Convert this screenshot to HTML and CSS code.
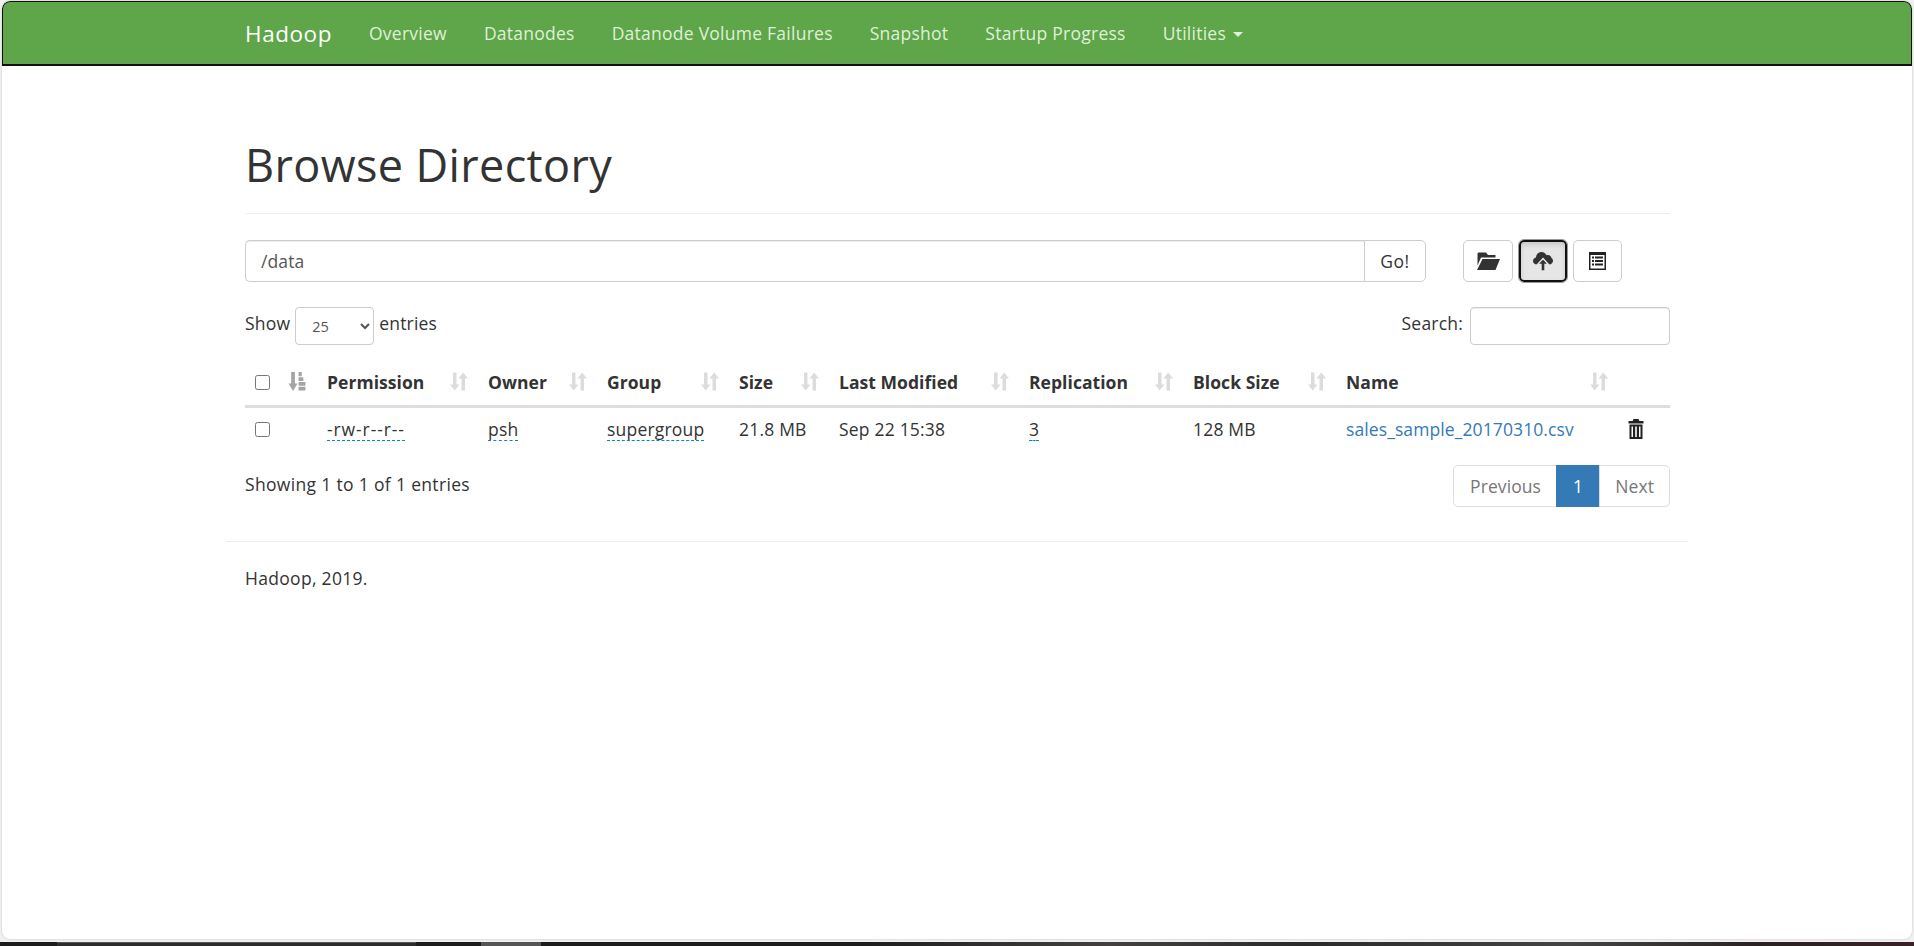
FILE: index.html
```html
<!DOCTYPE html>
<html lang="en">
<head>
<meta charset="utf-8">
<title>Browsing HDFS</title>
<link rel="stylesheet" href="styles.css">
</head>
<body>
<div class="window">
  <nav class="navbar">
    <div class="nav-inner">
      <a class="brand">Hadoop</a>
      <a class="nav-link">Overview</a>
      <a class="nav-link">Datanodes</a>
      <a class="nav-link">Datanode Volume Failures</a>
      <a class="nav-link">Snapshot</a>
      <a class="nav-link">Startup Progress</a>
      <a class="nav-link">Utilities <span class="caret"></span></a>
    </div>
  </nav>
  <main class="container">
    <h1 class="page-title">Browse Directory</h1>
    <div class="path-row">
      <div class="path-group">
        <input class="path-input" type="text" value="/data">
        <button class="go-btn">Go!</button>
      </div>
      <div class="tools">
        <button class="tool-btn">
          <svg class="icon" viewBox="0 0 24 18"><path d="M5 0.500h5l2 2.500h7.500v2.500h-14.500l-3.500 8v-11.500q0-1.500 1-1.500zM6.500 7h17.500l-4.500 11h-18.500z"/></svg>
        </button>
        <button class="tool-btn active">
          <svg class="icon cloud" viewBox="0 0 20 20"><path d="M4 13.500c-2.300 0-4-1.600-4-3.600 0-1.700 1.200-3 2.900-3.400 0.300-3.300 2.800-5.500 5.600-5.500 2.300 0 4.200 1.300 5 3.300 0.500-0.300 1-0.400 1.500-0.400 1.800 0 3.300 1.400 3.500 3.200 1 0.600 1.500 1.600 1.500 2.700 0 2-1.600 3.700-3.600 3.700z"/><path class="halo" d="M10 7.500l5.500 6h-3.500v6.500h-4v-6.500h-3.500z"/></svg>
        </button>
        <button class="tool-btn wide">
          <svg class="icon list" viewBox="0 0 17 18"><path fill-rule="evenodd" d="M0 0h17v18h-17zM1.500 3v13.500h14v-13.500zM3 4.500h2v2h-2zM6 4.500h8v2h-8zM3 8h2v2h-2zM6 8h8v2h-8zM3 11.500h2v2h-2zM6 11.500h8v2h-8z"/></svg>
        </button>
      </div>
    </div>
    <div class="controls">
      <label class="length">Show
        <select class="length-select"><option>25</option></select>
        entries</label>
      <label class="search">Search:
        <input class="search-input" type="text">
      </label>
    </div>
    <table class="files">
      <colgroup>
        <col class="c-check"><col class="c-order"><col class="c-perm"><col class="c-owner"><col class="c-group"><col class="c-size"><col class="c-mod"><col class="c-rep"><col class="c-block"><col class="c-name"><col class="c-del">
      </colgroup>
      <thead>
        <tr>
          <th><input class="check" type="checkbox"></th>
          <th><svg class="sort-by" viewBox="1 0 16 18"><path d="M3.500 0h3.500v11h2.500l-4.250 7-4.250-7h2.500zM10.500 0h3v4h-3zM10.500 5h4.500v3.500h-4.500zM10.500 9.500h6.500v3.500h-6.500zM10.500 14h6.500v3.500h-6.500z"/></svg></th>
          <th class="sortable">Permission<svg class="sort" viewBox="0 0 18 18"><use href="#sorticon"/></svg></th>
          <th class="sortable">Owner<svg class="sort" viewBox="0 0 18 18"><use href="#sorticon"/></svg></th>
          <th class="sortable">Group<svg class="sort" viewBox="0 0 18 18"><use href="#sorticon"/></svg></th>
          <th class="sortable">Size<svg class="sort" viewBox="0 0 18 18"><use href="#sorticon"/></svg></th>
          <th class="sortable">Last Modified<svg class="sort" viewBox="0 0 18 18"><use href="#sorticon"/></svg></th>
          <th class="sortable">Replication<svg class="sort" viewBox="0 0 18 18"><use href="#sorticon"/></svg></th>
          <th class="sortable">Block Size<svg class="sort" viewBox="0 0 18 18"><use href="#sorticon"/></svg></th>
          <th class="sortable">Name<svg class="sort" viewBox="0 0 18 18"><use href="#sorticon"/></svg></th>
          <th></th>
        </tr>
      </thead>
      <tbody>
        <tr>
          <td><input class="check" type="checkbox"></td>
          <td></td>
          <td><span class="editable perm">-rw-r--r--</span></td>
          <td><span class="editable">psh</span></td>
          <td><span class="editable">supergroup</span></td>
          <td>21.8 MB</td>
          <td>Sep 22 15:38</td>
          <td><span class="editable">3</span></td>
          <td>128 MB</td>
          <td><a class="file-link">sales_sample_20170310.csv</a></td>
          <td><svg class="trash" viewBox="0 0 16 20"><path fill-rule="evenodd" d="M5.500 0h5l0.800 2h4.200v2.500h-15v-2.500h4.200zM1.500 5.500h13v14.500h-13zM3.500 7.500v10.500h1.500v-10.500zM7.200 7.500v10.500h1.600v-10.500zM11 7.500v10.500h1.500v-10.500z"/></svg></td>
        </tr>
      </tbody>
    </table>
    <div class="table-foot">
      <div class="info">Showing 1 to 1 of 1 entries</div>
      <ul class="pagination">
        <li class="page prev">Previous</li>
        <li class="page current">1</li>
        <li class="page next">Next</li>
      </ul>
    </div>
  </main>
  <hr class="foot-rule">
  <p class="footer-text">Hadoop, 2019.</p>
</div>
<div class="taskbar">
  <div class="task-a"></div>
  <div class="task-b"></div>
</div>
<svg class="defs" width="0" height="0"><defs><g id="sorticon"><path d="M3 0h3.500v12h3l-4.800 6-4.700-6h3zM11.500 18h3.500v-12h3l-4.800-6-4.700 6h3z"/></g></defs></svg>
</body>
</html>
```

FILE: styles.css
```css
* { box-sizing: border-box; }
html, body { margin: 0; height: 946px; overflow: hidden; }
body {
  background: #f1f1f1;
  color: #333;
  font-family: "Open Sans", "Noto Sans", sans-serif;
  font-size: 17.5px;
  line-height: 25px;
  position: relative;
}
.window {
  position: absolute;
  left: 2px;
  right: 2px;
  top: 1px;
  height: 938px;
  background: #fff;
  border-radius: 8px;
  box-shadow: 0 0 2px #bbb;
  overflow: hidden;
}
.navbar {
  height: 65px;
  background: #5fa549;
  border: 1px solid #111;
  border-width: 1px 1px 2px 1px;
  border-radius: 8px 8px 0 0;
}
.nav-inner {
  margin-left: 242px;
  display: flex;
  align-items: center;
  height: 100%;
}
.brand { color: #fff; font-size: 22.5px; margin-right: 37px; letter-spacing: .55px; }
.nav-link { color: #dff0d8; margin-right: 37px; letter-spacing: .25px; }
.caret {
  display: inline-block;
  width: 0; height: 0;
  margin-left: 2px;
  vertical-align: middle;
  border-top: 5px solid #dff0d8;
  border-left: 5px solid transparent;
  border-right: 5px solid transparent;
}
.container { margin: 0 242px 0 243px; width: 1425px; }
.page-title {
  margin: 0;
  padding-top: 64px;
  height: 148px;
  border-bottom: 1px solid #eee;
  font-size: 45px;
  font-weight: 400;
  line-height: 70px;
  letter-spacing: .38px;
}
.path-row { display: flex; margin-top: 26px; height: 42px; }
.path-group { display: flex; width: 1181px; margin-right: 37px; }
.path-input {
  flex: 1;
  min-width: 0;
  border: 1px solid #ccc;
  border-right: 0;
  border-radius: 5px 0 0 5px;
  padding: 0 15px;
  font: inherit;
  color: #555;
  letter-spacing: .1px;
  box-shadow: inset 0 1px 1px rgba(0,0,0,.075);
  outline: none;
}
.go-btn {
  width: 62px;
  border: 1px solid #ccc;
  border-radius: 0 5px 5px 0;
  background: #fff;
  font: inherit;
  color: #333;
  padding: 0;
  letter-spacing: .5px;
}
.tools { display: flex; gap: 6px; }
.tool-btn {
  width: 50px;
  height: 42px;
  border: 1px solid #ccc;
  border-radius: 5px;
  background: #fff;
  padding: 0;
  display: flex;
  align-items: center;
  justify-content: center;
  color: #333;
}
.tool-btn.wide { width: 49px; }
.tool-btn.active {
  width: 48px;
  background: #e6e6e6;
  border: 2px solid #111;
  outline: 1px solid #999;
  box-shadow: inset 0 3px 5px rgba(0,0,0,.125);
}
.icon { height: 18px; width: 24px; fill: #333; }
.icon.cloud { width: 20px; height: 20px; }
.icon.list { height: 18px; width: 17px; fill: #222; }
.halo { stroke: #e6e6e6; stroke-width: 1.4px; }
.controls {
  display: flex;
  justify-content: space-between;
  margin-top: 25px;
  height: 38px;
}
.length, .search {
  display: flex;
  align-items: flex-start;
  line-height: 32px;
  letter-spacing: .2px;
}
.length-select {
  width: 79px;
  height: 38px;
  margin: 0 5px;
  background: #fff;
  border: 1px solid #ccc;
  border-radius: 4px;
  font-family: inherit;
  font-size: 14.5px;
  color: #555;
  padding-left: 12px;
}
.search-input {
  width: 200px;
  height: 38px;
  margin-left: 7px;
  border: 1px solid #ccc;
  border-radius: 4px;
  outline: none;
  box-shadow: inset 0 1px 1px rgba(0,0,0,.075);
}
.files {
  width: 1425px;
  table-layout: fixed;
  border-collapse: collapse;
  margin-top: 7px;
}
.c-check { width: 34px; } .c-order { width: 38px; } .c-perm { width: 161px; } .c-owner { width: 119px; }
.c-group { width: 132px; } .c-size { width: 100px; } .c-mod { width: 190px; } .c-rep { width: 164px; }
.c-block { width: 153px; } .c-name { width: 282px; } .c-del { width: 52px; }
th, td { text-align: left; padding: 10px; white-space: nowrap; letter-spacing: .2px; }
th {
  font-weight: 700;
  height: 54px;
  padding-top: 18px;
  border-bottom: 3px solid #ddd;
  position: relative;
}
td { height: 53px; padding-top: 5px; padding-bottom: 13px; }
.check { width: 15px; height: 15px; margin: 0; display: block; }
.sortable { letter-spacing: .05px; }
.sort {
  position: absolute;
  right: 10px;
  top: 20px;
  width: 18px;
  height: 19px;
  fill: #dcdcdc;
}
.sort-by { position: absolute; left: 9px; top: 20px; width: 18px; height: 19px; fill: #a4a4a4; }
.editable { border-bottom: 1px dashed #08c; display: inline-block; line-height: 21px; }
.editable.perm { letter-spacing: .9px; }
.file-link { color: #337ab7; letter-spacing: .1px; }
.trash { display: block; width: 16px; height: 20px; margin-top: -2px; fill: #222; }
.table-foot { display: flex; justify-content: space-between; margin-top: 5px; }
.info { padding-top: 7px; letter-spacing: .33px; }
.pagination {
  display: flex;
  margin: 0;
  padding: 0;
  list-style: none;
  height: 42px;
}
.page {
  border: 1px solid #ddd;
  margin-left: -1px;
  padding: 8px 16px;
  color: #777;
  letter-spacing: .1px;
  background: #fff;
  line-height: 25px;
}
.page.prev { border-radius: 5px 0 0 5px; margin-left: 0; padding-right: 15px; }
.page.next { border-radius: 0 5px 5px 0; padding: 8px 15px; }
.page.current { background: #337ab7; border-color: #337ab7; color: #fff; }
.foot-rule {
  margin: 34px 0 0 224px;
  width: 1462px;
  border: 0;
  border-top: 1px solid #eee;
}
.footer-text { margin: 24px 0 0 243px; letter-spacing: .3px; }
.taskbar {
  position: absolute;
  left: 0; right: 0; bottom: 0;
  height: 4px;
  background: linear-gradient(90deg, #1d1d1d 0, #1d1d1d 45%, #444040 58%, #2a2a2a 68%, #444 82%, #2a2222 92%, #3a2226 100%);
}
.task-a { position: absolute; left: 57px; width: 359px; top: 0; height: 4px; background: #2c2c2c; border-top: 1px solid #555; }
.task-b { position: absolute; left: 481px; width: 60px; top: 0; height: 4px; background: #555; }
.defs { position: absolute; }
```
